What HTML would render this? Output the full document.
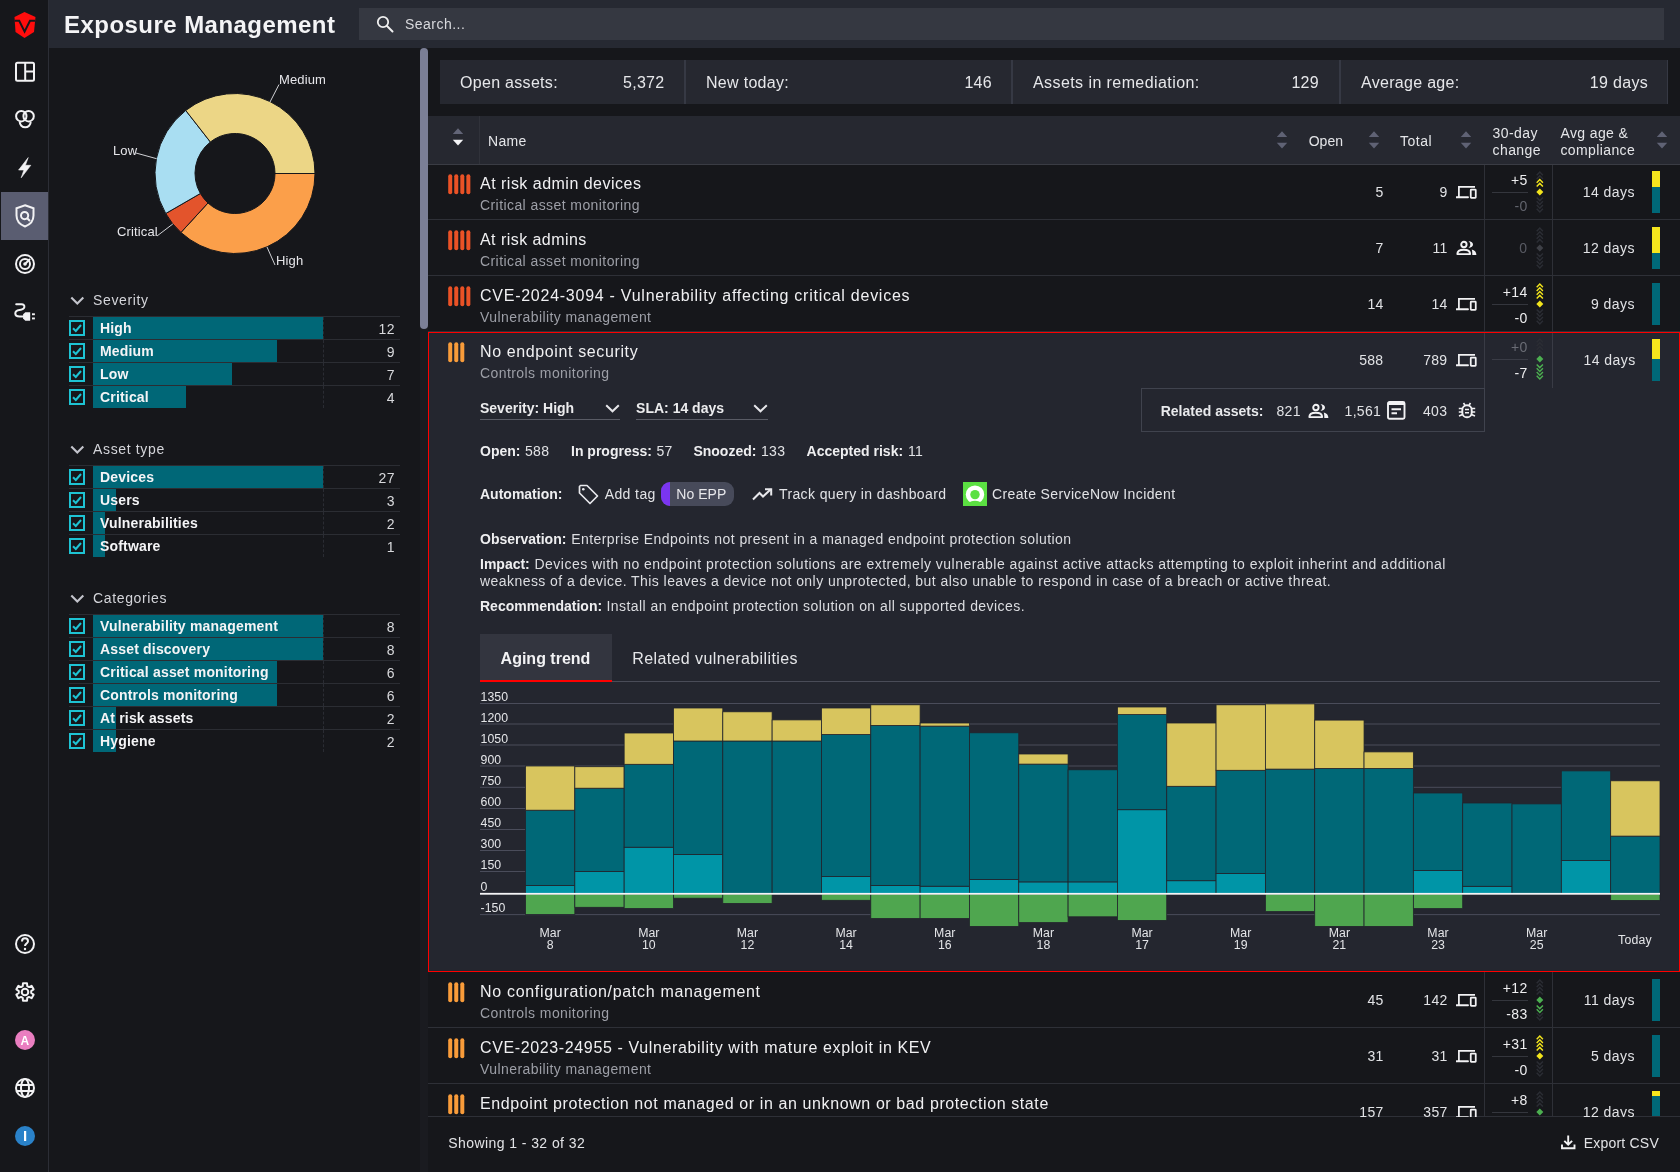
<!DOCTYPE html>
<html><head><meta charset="utf-8">
<style>
*{box-sizing:border-box;margin:0;padding:0}
html,body{width:1680px;height:1172px;overflow:hidden;background:#16171b}
body{will-change:transform;font-family:"Liberation Sans",sans-serif;color:#ececee;letter-spacing:0.03em;position:relative}
.a{position:absolute;white-space:nowrap}
.nav{left:0;top:0;width:49px;height:1172px;background:#16171b;border-right:1px solid #2c2e36}
.hdr{left:49px;top:0;width:1631px;height:48px;background:#262932}
.title{left:64px;top:10px;font-size:24px;font-weight:bold;color:#f4f4f6;letter-spacing:0.019em;line-height:30px}
.search{left:359px;top:8px;width:1305px;height:32px;background:#353841}
.stxt{left:405px;top:16px;font-size:14px;color:#d8d9dd;line-height:16px}
.sb{left:420px;top:48px;width:8px;height:281px;background:#7b7f96;border-radius:4px}
.track{left:420px;top:48px;width:8px;height:1124px;background:#1a1b20}

.lbl{font-size:13px;color:#e6e6ea;line-height:15px;letter-spacing:0.01em}
.fh{font-size:14px;color:#d4d5da;line-height:16px;left:93px;letter-spacing:0.65px}
.chev{left:69px}
.frow{left:69px;width:331px;height:23px;border-top:1px solid #2b2d33}
.cb{left:69px;width:16px;height:16px;border:2px solid #1ec3d3;border-radius:1px}
.bar{left:93px;height:23px;background:#006777}
.ft{left:100px;font-size:14px;font-weight:bold;color:#f4f4f6;line-height:16px;letter-spacing:0.18px}
.fc{right:1285px;font-size:14px;color:#d8d9dc;line-height:16px;text-align:right}
.dash{left:323px;width:0;height:23px;border-left:1px dashed #2a2c33}
</style></head><body>
<div class="a nav"></div>
<div class="a hdr"></div>
<div class="a title">Exposure Management</div>
<div class="a search"></div>
<svg class="a" style="left:376px;top:15px" width="18" height="18" viewBox="0 0 18 18"><circle cx="7" cy="7" r="5.2" fill="none" stroke="#f0f0f0" stroke-width="1.8"/><path d="M11 11 L16.5 16.5" stroke="#f0f0f0" stroke-width="2" stroke-linecap="round"/></svg>
<div class="a stxt">Search...</div>

<!-- DONUT -->
<svg class="a" style="left:49px;top:48px" width="371" height="240" viewBox="49 48 371 240">
<path d="M315.00 173.50 A80 80 0 0 1 180.95 232.48 L207.98 202.99 A40 40 0 0 0 275.00 173.50 Z" fill="#fb9f4a" stroke="#16171b" stroke-width="1"/>
<path d="M180.95 232.48 A80 80 0 0 1 165.72 213.50 L200.36 193.50 A40 40 0 0 0 207.98 202.99 Z" fill="#e3542c" stroke="#16171b" stroke-width="1"/>
<path d="M165.72 213.50 A80 80 0 0 1 185.75 110.46 L210.37 141.98 A40 40 0 0 0 200.36 193.50 Z" fill="#a9def2" stroke="#16171b" stroke-width="1"/>
<path d="M185.75 110.46 A80 80 0 0 1 315.00 173.50 L275.00 173.50 A40 40 0 0 0 210.37 141.98 Z" fill="#ecd686" stroke="#16171b" stroke-width="1"/>
<g stroke="#cfd0d4" stroke-width="1" fill="none">
<path d="M279 84.5 L270 102"/>
<path d="M136 153 L156.6 158.7"/>
<path d="M157 236 L172.8 224"/>
<path d="M267 247 L275 265"/>
</g>
</svg>
<div class="a lbl" style="left:279px;top:72px">Medium</div>
<div class="a lbl" style="left:113px;top:143px">Low</div>
<div class="a lbl" style="left:117px;top:224px">Critical</div>
<div class="a lbl" style="left:276px;top:253px">High</div>
<svg class="a chev" style="top:295.5px;left:69.5px" width="15" height="10" viewBox="0 0 15 10"><path d="M1.3 1.5 L7.3 7.5 L13.3 1.5" fill="none" stroke="#c3c4cc" stroke-width="2.1"/></svg>
<div class="a fh" style="top:292px">Severity</div>
<div class="a frow" style="top:316px"></div><div class="a bar" style="top:317px;width:230px;height:22px"></div><div class="a dash" style="top:317px;height:22px"></div><svg class="a" style="left:69px;top:320px" width="16" height="16" viewBox="0 0 16 16"><rect x="1" y="1" width="14" height="14" fill="none" stroke="#1ec3d3" stroke-width="2"/><path d="M4 8.2 L6.8 11 L12 5" fill="none" stroke="#1ec3d3" stroke-width="2"/></svg><div class="a ft" style="top:320px">High</div><div class="a fc" style="top:321px">12</div>
<div class="a frow" style="top:339px"></div><div class="a bar" style="top:340px;width:184px;height:22px"></div><div class="a dash" style="top:340px;height:22px"></div><svg class="a" style="left:69px;top:343px" width="16" height="16" viewBox="0 0 16 16"><rect x="1" y="1" width="14" height="14" fill="none" stroke="#1ec3d3" stroke-width="2"/><path d="M4 8.2 L6.8 11 L12 5" fill="none" stroke="#1ec3d3" stroke-width="2"/></svg><div class="a ft" style="top:343px">Medium</div><div class="a fc" style="top:344px">9</div>
<div class="a frow" style="top:362px"></div><div class="a bar" style="top:363px;width:138.5px;height:22px"></div><div class="a dash" style="top:363px;height:22px"></div><svg class="a" style="left:69px;top:366px" width="16" height="16" viewBox="0 0 16 16"><rect x="1" y="1" width="14" height="14" fill="none" stroke="#1ec3d3" stroke-width="2"/><path d="M4 8.2 L6.8 11 L12 5" fill="none" stroke="#1ec3d3" stroke-width="2"/></svg><div class="a ft" style="top:366px">Low</div><div class="a fc" style="top:367px">7</div>
<div class="a frow" style="top:385px"></div><div class="a bar" style="top:386px;width:92.69999999999999px;height:22px"></div><div class="a dash" style="top:386px;height:22px"></div><svg class="a" style="left:69px;top:389px" width="16" height="16" viewBox="0 0 16 16"><rect x="1" y="1" width="14" height="14" fill="none" stroke="#1ec3d3" stroke-width="2"/><path d="M4 8.2 L6.8 11 L12 5" fill="none" stroke="#1ec3d3" stroke-width="2"/></svg><div class="a ft" style="top:389px">Critical</div><div class="a fc" style="top:390px">4</div>
<svg class="a chev" style="top:444.5px;left:69.5px" width="15" height="10" viewBox="0 0 15 10"><path d="M1.3 1.5 L7.3 7.5 L13.3 1.5" fill="none" stroke="#c3c4cc" stroke-width="2.1"/></svg>
<div class="a fh" style="top:441px">Asset type</div>
<div class="a frow" style="top:465px"></div><div class="a bar" style="top:466px;width:230px;height:22px"></div><div class="a dash" style="top:466px;height:22px"></div><svg class="a" style="left:69px;top:469px" width="16" height="16" viewBox="0 0 16 16"><rect x="1" y="1" width="14" height="14" fill="none" stroke="#1ec3d3" stroke-width="2"/><path d="M4 8.2 L6.8 11 L12 5" fill="none" stroke="#1ec3d3" stroke-width="2"/></svg><div class="a ft" style="top:469px">Devices</div><div class="a fc" style="top:470px">27</div>
<div class="a frow" style="top:488px"></div><div class="a bar" style="top:489px;width:22.700000000000003px;height:22px"></div><div class="a dash" style="top:489px;height:22px"></div><svg class="a" style="left:69px;top:492px" width="16" height="16" viewBox="0 0 16 16"><rect x="1" y="1" width="14" height="14" fill="none" stroke="#1ec3d3" stroke-width="2"/><path d="M4 8.2 L6.8 11 L12 5" fill="none" stroke="#1ec3d3" stroke-width="2"/></svg><div class="a ft" style="top:492px">Users</div><div class="a fc" style="top:493px">3</div>
<div class="a frow" style="top:511px"></div><div class="a bar" style="top:512px;width:12px;height:22px"></div><div class="a dash" style="top:512px;height:22px"></div><svg class="a" style="left:69px;top:515px" width="16" height="16" viewBox="0 0 16 16"><rect x="1" y="1" width="14" height="14" fill="none" stroke="#1ec3d3" stroke-width="2"/><path d="M4 8.2 L6.8 11 L12 5" fill="none" stroke="#1ec3d3" stroke-width="2"/></svg><div class="a ft" style="top:515px">Vulnerabilities</div><div class="a fc" style="top:516px">2</div>
<div class="a frow" style="top:534px"></div><div class="a bar" style="top:535px;width:12px;height:22px"></div><div class="a dash" style="top:535px;height:22px"></div><svg class="a" style="left:69px;top:538px" width="16" height="16" viewBox="0 0 16 16"><rect x="1" y="1" width="14" height="14" fill="none" stroke="#1ec3d3" stroke-width="2"/><path d="M4 8.2 L6.8 11 L12 5" fill="none" stroke="#1ec3d3" stroke-width="2"/></svg><div class="a ft" style="top:538px">Software</div><div class="a fc" style="top:539px">1</div>
<svg class="a chev" style="top:593.5px;left:69.5px" width="15" height="10" viewBox="0 0 15 10"><path d="M1.3 1.5 L7.3 7.5 L13.3 1.5" fill="none" stroke="#c3c4cc" stroke-width="2.1"/></svg>
<div class="a fh" style="top:590px">Categories</div>
<div class="a frow" style="top:614px"></div><div class="a bar" style="top:615px;width:230px;height:22px"></div><div class="a dash" style="top:615px;height:22px"></div><svg class="a" style="left:69px;top:618px" width="16" height="16" viewBox="0 0 16 16"><rect x="1" y="1" width="14" height="14" fill="none" stroke="#1ec3d3" stroke-width="2"/><path d="M4 8.2 L6.8 11 L12 5" fill="none" stroke="#1ec3d3" stroke-width="2"/></svg><div class="a ft" style="top:618px">Vulnerability management</div><div class="a fc" style="top:619px">8</div>
<div class="a frow" style="top:637px"></div><div class="a bar" style="top:638px;width:230px;height:22px"></div><div class="a dash" style="top:638px;height:22px"></div><svg class="a" style="left:69px;top:641px" width="16" height="16" viewBox="0 0 16 16"><rect x="1" y="1" width="14" height="14" fill="none" stroke="#1ec3d3" stroke-width="2"/><path d="M4 8.2 L6.8 11 L12 5" fill="none" stroke="#1ec3d3" stroke-width="2"/></svg><div class="a ft" style="top:641px">Asset discovery</div><div class="a fc" style="top:642px">8</div>
<div class="a frow" style="top:660px"></div><div class="a bar" style="top:661px;width:184px;height:22px"></div><div class="a dash" style="top:661px;height:22px"></div><svg class="a" style="left:69px;top:664px" width="16" height="16" viewBox="0 0 16 16"><rect x="1" y="1" width="14" height="14" fill="none" stroke="#1ec3d3" stroke-width="2"/><path d="M4 8.2 L6.8 11 L12 5" fill="none" stroke="#1ec3d3" stroke-width="2"/></svg><div class="a ft" style="top:664px">Critical asset monitoring</div><div class="a fc" style="top:665px">6</div>
<div class="a frow" style="top:683px"></div><div class="a bar" style="top:684px;width:184px;height:22px"></div><div class="a dash" style="top:684px;height:22px"></div><svg class="a" style="left:69px;top:687px" width="16" height="16" viewBox="0 0 16 16"><rect x="1" y="1" width="14" height="14" fill="none" stroke="#1ec3d3" stroke-width="2"/><path d="M4 8.2 L6.8 11 L12 5" fill="none" stroke="#1ec3d3" stroke-width="2"/></svg><div class="a ft" style="top:687px">Controls monitoring</div><div class="a fc" style="top:688px">6</div>
<div class="a frow" style="top:706px"></div><div class="a bar" style="top:707px;width:23px;height:22px"></div><div class="a dash" style="top:707px;height:22px"></div><svg class="a" style="left:69px;top:710px" width="16" height="16" viewBox="0 0 16 16"><rect x="1" y="1" width="14" height="14" fill="none" stroke="#1ec3d3" stroke-width="2"/><path d="M4 8.2 L6.8 11 L12 5" fill="none" stroke="#1ec3d3" stroke-width="2"/></svg><div class="a ft" style="top:710px">At risk assets</div><div class="a fc" style="top:711px">2</div>
<div class="a frow" style="top:729px"></div><div class="a bar" style="top:730px;width:23px;height:22px"></div><div class="a dash" style="top:730px;height:22px"></div><svg class="a" style="left:69px;top:733px" width="16" height="16" viewBox="0 0 16 16"><rect x="1" y="1" width="14" height="14" fill="none" stroke="#1ec3d3" stroke-width="2"/><path d="M4 8.2 L6.8 11 L12 5" fill="none" stroke="#1ec3d3" stroke-width="2"/></svg><div class="a ft" style="top:733px">Hygiene</div><div class="a fc" style="top:734px">2</div>
<div class="a track"></div>
<div class="a sb"></div>

<!-- NAV ICONS -->
<svg class="a" style="left:0;top:0" width="48" height="1172" viewBox="0 0 48 1172">
 <g>
  <path d="M24.5 12 L35.5 17 L34 32 L24.5 38 L15.5 32 L14.5 17 Z" fill="#ff0d0d"/>
  <path d="M14.5 20.8 L19.2 20.8 L24.6 31.6 L30 20.8 L35 20.8" fill="none" stroke="#16171b" stroke-width="2"/>
 </g>
 <g fill="none" stroke="#f2f2f4" stroke-width="2">
  <rect x="16" y="62.7" width="18" height="18" rx="1.5"/>
  <path d="M25.2 62.7 V80.7 M25.2 71.6 H34"/>
  <circle cx="21.3" cy="116.2" r="5.2"/><circle cx="28.6" cy="116.2" r="5.2"/>
  <path d="M19.7 121.8 A5.5 5.5 0 1 0 30.7 121.8"/>
 </g>
 <path d="M28.2 157.6 L18.6 170 H23.9 L21.2 177.8 L30.8 165.3 H25.4 Z" fill="#f2f2f4" stroke="#f2f2f4" stroke-width="0.6" stroke-linejoin="round"/>
 <rect x="1" y="192" width="47" height="48" fill="#5a5d71"/>
 <g fill="none" stroke="#f2f2f4" stroke-width="2">
  <path d="M25 205.2 L33.5 208.3 V215.5 C33.5 221 29.5 224.8 25 226.5 C20.5 224.8 16.5 221 16.5 215.5 V208.3 Z"/>
  <circle cx="24.6" cy="215.6" r="3.6"/><path d="M27.2 218.2 L30 221"/>
  <circle cx="25" cy="264" r="9"/><circle cx="25" cy="264" r="5"/>
  <path d="M25 264 L30 259"/>
 </g>
 <circle cx="25" cy="264" r="1.8" fill="#f2f2f4"/>
 <path d="M16.2 304.2 H21.5 C23.8 304.2 24.6 305.8 24.3 307.3 C23.9 309.1 21.8 309.8 19.5 310.1 C16.6 310.5 15.3 312 15.3 313.6 C15.3 315.5 17 316.5 19.5 316.5 H23.5" fill="none" stroke="#f2f2f4" stroke-width="2" stroke-linecap="round"/>
 <path d="M23.1 314.3 L25.3 312.2 H30.2 V320.7 H25.3 L23.1 318.6 Z" fill="#f2f2f4"/>
 <rect x="32" y="313.3" width="2.9" height="1.9" fill="#f2f2f4"/><rect x="32" y="317.5" width="2.9" height="1.9" fill="#f2f2f4"/>
 <g fill="none" stroke="#f2f2f4" stroke-width="2">
  <circle cx="25" cy="944" r="9"/>
  <path d="M22 941.5 C22 939.5 23.3 938.3 25 938.3 C26.8 938.3 28 939.5 28 941.2 C28 943.5 25 943.6 25 946"/>
 </g>
 <circle cx="25" cy="949" r="1.2" fill="#f2f2f4"/>
 <g transform="translate(25 992)">
  <path fill="none" stroke="#f2f2f4" stroke-width="2" stroke-linejoin="round" d="M-2.26 -5.88 L-2.02 -8.77 L2.02 -8.77 L2.26 -5.88 L3.96 -4.90 L6.58 -6.14 L8.61 -2.63 L6.22 -0.99 L6.22 0.99 L8.61 2.63 L6.58 6.14 L3.96 4.90 L2.26 5.88 L2.02 8.77 L-2.02 8.77 L-2.26 5.88 L-3.96 4.90 L-6.58 6.14 L-8.61 2.63 L-6.22 0.99 L-6.22 -0.99 L-8.61 -2.63 L-6.58 -6.14 L-3.96 -4.90 Z"/>
  <circle r="3.3" fill="none" stroke="#f2f2f4" stroke-width="2"/>
 </g>
 <circle cx="25" cy="1040" r="10" fill="#ea7ec0"/>
 <text x="25" y="1044.5" font-family="Liberation Sans" font-size="12" font-weight="bold" fill="#fff" text-anchor="middle">A</text>
 <g fill="none" stroke="#f2f2f4" stroke-width="2">
  <circle cx="25" cy="1088" r="9"/>
  <ellipse cx="25" cy="1088" rx="4" ry="9"/>
  <path d="M16 1085 H34 M16 1091 H34"/>
 </g>
 <circle cx="25" cy="1136" r="10" fill="#2a82c9"/>
 <rect x="24" y="1131" width="2.2" height="10" fill="#fff"/>
</svg>
<!-- MAIN -->
<div class="a" style="left:440px;top:60px;width:1228px;height:44px;background:#262830;"></div>
<div class="a" style="left:684px;top:60px;width:2px;height:44px;background:#363944;"></div>
<div class="a" style="left:1011px;top:60px;width:2px;height:44px;background:#363944;"></div>
<div class="a" style="left:1339px;top:60px;width:2px;height:44px;background:#363944;"></div>
<div class="a" style="left:1667px;top:60px;width:1px;height:44px;background:#363944;"></div>
<div class="a" style="left:460px;top:73.0px;font-size:16px;line-height:20px;font-weight:normal;color:#e6e7ea;letter-spacing:0.3px;">Open assets:</div>
<div class="a" style="right:1015.5px;text-align:right;top:73.0px;font-size:16px;line-height:20px;font-weight:normal;color:#e6e7ea;letter-spacing:0.3px;">5,372</div>
<div class="a" style="left:706px;top:73.0px;font-size:16px;line-height:20px;font-weight:normal;color:#e6e7ea;letter-spacing:0.3px;">New today:</div>
<div class="a" style="right:688px;text-align:right;top:73.0px;font-size:16px;line-height:20px;font-weight:normal;color:#e6e7ea;letter-spacing:0.3px;">146</div>
<div class="a" style="left:1033px;top:73.0px;font-size:16px;line-height:20px;font-weight:normal;color:#e6e7ea;letter-spacing:0.42px;">Assets in remediation:</div>
<div class="a" style="right:361px;text-align:right;top:73.0px;font-size:16px;line-height:20px;font-weight:normal;color:#e6e7ea;letter-spacing:0.3px;">129</div>
<div class="a" style="left:1361px;top:73.0px;font-size:16px;line-height:20px;font-weight:normal;color:#e6e7ea;letter-spacing:0.3px;">Average age:</div>
<div class="a" style="right:32px;text-align:right;top:73.0px;font-size:16px;line-height:20px;font-weight:normal;color:#e6e7ea;letter-spacing:0.3px;">19 days</div>
<div class="a" style="left:428px;top:116px;width:1252px;height:48px;background:#262830;"></div>
<div class="a" style="left:428px;top:164px;width:1252px;height:1px;background:#3a3c44;"></div>
<div class="a" style="left:479px;top:116px;width:1px;height:48px;background:#30323a;"></div>
<svg class="a" style="left:451.7px;top:127.5px" width="12" height="18" viewBox="0 0 12 18"><path d="M0.8 6 L6 0.2 L11.2 6 Z" fill="#626577"/><path d="M0.8 11.8 L6 17.6 L11.2 11.8 Z" fill="#f4f4f6"/></svg>
<div class="a" style="left:488px;top:131.5px;font-size:14px;line-height:18px;font-weight:normal;color:#e4e5e8;letter-spacing:0.3px;">Name</div>
<svg class="a" style="left:1275.8px;top:131px" width="12" height="18" viewBox="0 0 12 18"><path d="M0.8 6 L6 0.2 L11.2 6 Z" fill="#5f6274"/><path d="M0.8 11.8 L6 17.6 L11.2 11.8 Z" fill="#5f6274"/></svg>
<svg class="a" style="left:1367.8px;top:131px" width="12" height="18" viewBox="0 0 12 18"><path d="M0.8 6 L6 0.2 L11.2 6 Z" fill="#5f6274"/><path d="M0.8 11.8 L6 17.6 L11.2 11.8 Z" fill="#5f6274"/></svg>
<svg class="a" style="left:1459.6px;top:131px" width="12" height="18" viewBox="0 0 12 18"><path d="M0.8 6 L6 0.2 L11.2 6 Z" fill="#5f6274"/><path d="M0.8 11.8 L6 17.6 L11.2 11.8 Z" fill="#5f6274"/></svg>
<svg class="a" style="left:1655.7px;top:131px" width="12" height="18" viewBox="0 0 12 18"><path d="M0.8 6 L6 0.2 L11.2 6 Z" fill="#5f6274"/><path d="M0.8 11.8 L6 17.6 L11.2 11.8 Z" fill="#5f6274"/></svg>
<div class="a" style="left:1308.7px;top:131.9px;font-size:14px;line-height:18px;font-weight:normal;color:#e4e5e8;letter-spacing:0.02px;">Open</div>
<div class="a" style="left:1400px;top:131.9px;font-size:14px;line-height:18px;font-weight:normal;color:#e4e5e8;letter-spacing:0.5px;">Total</div>
<div class="a" style="left:1492.6px;top:123.5px;font-size:14px;line-height:18px;font-weight:normal;color:#e4e5e8;letter-spacing:0.4px;">30-day</div>
<div class="a" style="left:1492.6px;top:140.7px;font-size:14px;line-height:18px;font-weight:normal;color:#e4e5e8;letter-spacing:0.4px;">change</div>
<div class="a" style="left:1560.4px;top:123.5px;font-size:14px;line-height:18px;font-weight:normal;color:#e4e5e8;letter-spacing:0.4px;">Avg age &amp;</div>
<div class="a" style="left:1560.4px;top:140.7px;font-size:14px;line-height:18px;font-weight:normal;color:#e4e5e8;letter-spacing:0.4px;">compliance</div>
<div class="a" style="left:428px;top:165px;width:1252px;height:167px;background:#16171b;"></div>
<div class="a" style="left:428px;top:219px;width:1252px;height:1px;background:#2e3037;"></div>
<div class="a" style="left:428px;top:275px;width:1252px;height:1px;background:#2e3037;"></div>
<div class="a" style="left:428px;top:331px;width:1252px;height:1px;background:#2e3037;"></div>
<div class="a" style="left:1484px;top:165px;width:1px;height:167px;background:#2e3037;"></div>
<div class="a" style="left:1552px;top:165px;width:1px;height:167px;background:#2e3037;"></div>
<svg class="a" style="left:448px;top:174px" width="24" height="21" viewBox="0 0 24 21"><rect x="0.20" y="0.3" width="4" height="20" rx="2" fill="#ea5226"/><rect x="6.25" y="0.3" width="4" height="20" rx="2" fill="#ea5226"/><rect x="12.30" y="0.3" width="4" height="20" rx="2" fill="#ea5226"/><rect x="18.35" y="0.3" width="4" height="20" rx="2" fill="#ea5226"/></svg>
<div class="a" style="left:480px;top:173.5px;font-size:16px;line-height:20px;font-weight:normal;color:#f0f0f2;letter-spacing:0.487px;">At risk admin devices</div>
<div class="a" style="left:480px;top:196.0px;font-size:14px;line-height:18px;font-weight:normal;color:#9d9fa7;letter-spacing:0.42px;">Critical asset monitoring</div>
<div class="a" style="right:296.4000000000001px;text-align:right;top:183.4px;font-size:14px;line-height:18px;font-weight:normal;color:#e2e3e6;letter-spacing:0.3px;">5</div>
<div class="a" style="right:232.4000000000001px;text-align:right;top:183.4px;font-size:14px;line-height:18px;font-weight:normal;color:#e2e3e6;letter-spacing:0.3px;">9</div>
<svg class="a" style="left:1455.5px;top:185px" width="22" height="15" viewBox="0 0 22 15"><path d="M2.9 12 V1.8 H19" fill="none" stroke="#f2f2f4" stroke-width="1.75"/><path d="M0.5 12.3 H12" stroke="#f2f2f4" stroke-width="1.9" stroke-linecap="round"/><rect x="14.75" y="4.65" width="5" height="8.1" rx="0.5" fill="none" stroke="#f2f2f4" stroke-width="1.75"/></svg>
<div class="a" style="right:152.5px;text-align:right;top:170.6px;font-size:14px;line-height:18px;font-weight:normal;color:#eeeef0;letter-spacing:0.3px;">+5</div>
<div class="a" style="right:152.5px;text-align:right;top:196.5px;font-size:14px;line-height:18px;font-weight:normal;color:#62646d;letter-spacing:0.3px;">-0</div>
<div class="a" style="left:1492px;top:192px;width:36px;height:1px;background:#34363d;"></div>
<svg class="a" style="left:1535.5px;top:168.4px" width="8" height="48" viewBox="0 0 8 48"><path d="M0.7 18.60 L3.8 15.40 L6.9 18.60" fill="none" stroke="#f2e41c" stroke-width="1.45"/><path d="M0.7 14.80 L3.8 11.60 L6.9 14.80" fill="none" stroke="#f2e41c" stroke-width="1.45"/><path d="M0.7 11.00 L3.8 7.80 L6.9 11.00" fill="none" stroke="#2b2d34" stroke-width="1.45"/><path d="M0.7 7.20 L3.8 4.00 L6.9 7.20" fill="none" stroke="#2b2d34" stroke-width="1.45"/><path d="M0.7 29.40 L3.8 32.60 L6.9 29.40" fill="none" stroke="#2b2d34" stroke-width="1.45"/><path d="M0.7 33.20 L3.8 36.40 L6.9 33.20" fill="none" stroke="#2b2d34" stroke-width="1.45"/><path d="M0.7 37.00 L3.8 40.20 L6.9 37.00" fill="none" stroke="#2b2d34" stroke-width="1.45"/><path d="M0.7 40.80 L3.8 44.00 L6.9 40.80" fill="none" stroke="#2b2d34" stroke-width="1.45"/><path d="M3.8 20.6 L7.3 24 L3.8 27.4 L0.3 24 Z" fill="#f2e41c"/></svg>
<div class="a" style="right:45px;text-align:right;top:183.4px;font-size:14px;line-height:18px;font-weight:normal;color:#e2e3e6;letter-spacing:0.45px;">14 days</div>
<div class="a" style="left:1652px;top:171px;width:8px;height:16px;background:#f5e51d;"></div>
<div class="a" style="left:1652px;top:187px;width:8px;height:26px;background:#006878;"></div>
<svg class="a" style="left:448px;top:230px" width="24" height="21" viewBox="0 0 24 21"><rect x="0.20" y="0.3" width="4" height="20" rx="2" fill="#ea5226"/><rect x="6.25" y="0.3" width="4" height="20" rx="2" fill="#ea5226"/><rect x="12.30" y="0.3" width="4" height="20" rx="2" fill="#ea5226"/><rect x="18.35" y="0.3" width="4" height="20" rx="2" fill="#ea5226"/></svg>
<div class="a" style="left:480px;top:229.5px;font-size:16px;line-height:20px;font-weight:normal;color:#f0f0f2;letter-spacing:0.452px;">At risk admins</div>
<div class="a" style="left:480px;top:252.0px;font-size:14px;line-height:18px;font-weight:normal;color:#9d9fa7;letter-spacing:0.42px;">Critical asset monitoring</div>
<div class="a" style="right:296.4000000000001px;text-align:right;top:239.4px;font-size:14px;line-height:18px;font-weight:normal;color:#e2e3e6;letter-spacing:0.3px;">7</div>
<div class="a" style="right:232.4000000000001px;text-align:right;top:239.4px;font-size:14px;line-height:18px;font-weight:normal;color:#e2e3e6;letter-spacing:0.3px;">11</div>
<svg class="a" style="left:1455.5px;top:240px" width="22" height="16" viewBox="0 0 22 16"><circle cx="7.9" cy="4.5" r="2.7" fill="none" stroke="#f2f2f4" stroke-width="1.9"/><path d="M12.4 1.1 C15.5 1.3 17 2.8 17 4.6 C17 6.4 15.5 7.9 12.4 8.1 C13.7 7 14.3 5.9 14.3 4.6 C14.3 3.3 13.7 2.2 12.4 1.1 Z" fill="#f2f2f4"/><path d="M1.35 14.1 C1.35 11.3 4.3 9.8 7.75 9.8 C11.2 9.8 14.15 11.3 14.15 14.1 Z" fill="none" stroke="#f2f2f4" stroke-width="1.9" stroke-linejoin="round"/><path d="M15.7 9.6 C18.6 10.3 20.4 12 20.4 15.1 H16.3 C16.3 12.6 16.2 10.9 15.7 9.6 Z" fill="#f2f2f4"/></svg>
<div class="a" style="right:152.5px;text-align:right;top:239.4px;font-size:14px;line-height:18px;font-weight:normal;color:#585a63;letter-spacing:0.42px;">0</div>
<svg class="a" style="left:1535.5px;top:224.4px" width="8" height="48" viewBox="0 0 8 48"><path d="M0.7 18.60 L3.8 15.40 L6.9 18.60" fill="none" stroke="#2b2d34" stroke-width="1.45"/><path d="M0.7 14.80 L3.8 11.60 L6.9 14.80" fill="none" stroke="#2b2d34" stroke-width="1.45"/><path d="M0.7 11.00 L3.8 7.80 L6.9 11.00" fill="none" stroke="#2b2d34" stroke-width="1.45"/><path d="M0.7 7.20 L3.8 4.00 L6.9 7.20" fill="none" stroke="#2b2d34" stroke-width="1.45"/><path d="M0.7 29.40 L3.8 32.60 L6.9 29.40" fill="none" stroke="#2b2d34" stroke-width="1.45"/><path d="M0.7 33.20 L3.8 36.40 L6.9 33.20" fill="none" stroke="#2b2d34" stroke-width="1.45"/><path d="M0.7 37.00 L3.8 40.20 L6.9 37.00" fill="none" stroke="#2b2d34" stroke-width="1.45"/><path d="M0.7 40.80 L3.8 44.00 L6.9 40.80" fill="none" stroke="#2b2d34" stroke-width="1.45"/><path d="M3.8 20.6 L7.3 24 L3.8 27.4 L0.3 24 Z" fill="#3e4047"/></svg>
<div class="a" style="right:45px;text-align:right;top:239.4px;font-size:14px;line-height:18px;font-weight:normal;color:#e2e3e6;letter-spacing:0.45px;">12 days</div>
<div class="a" style="left:1652px;top:227px;width:8px;height:26px;background:#f5e51d;"></div>
<div class="a" style="left:1652px;top:253px;width:8px;height:16px;background:#006878;"></div>
<svg class="a" style="left:448px;top:286px" width="24" height="21" viewBox="0 0 24 21"><rect x="0.20" y="0.3" width="4" height="20" rx="2" fill="#ea5226"/><rect x="6.25" y="0.3" width="4" height="20" rx="2" fill="#ea5226"/><rect x="12.30" y="0.3" width="4" height="20" rx="2" fill="#ea5226"/><rect x="18.35" y="0.3" width="4" height="20" rx="2" fill="#ea5226"/></svg>
<div class="a" style="left:480px;top:285.5px;font-size:16px;line-height:20px;font-weight:normal;color:#f0f0f2;letter-spacing:0.744px;">CVE-2024-3094 - Vulnerability affecting critical devices</div>
<div class="a" style="left:480px;top:308.0px;font-size:14px;line-height:18px;font-weight:normal;color:#9d9fa7;letter-spacing:0.42px;">Vulnerability management</div>
<div class="a" style="right:296.4000000000001px;text-align:right;top:295.4px;font-size:14px;line-height:18px;font-weight:normal;color:#e2e3e6;letter-spacing:0.3px;">14</div>
<div class="a" style="right:232.4000000000001px;text-align:right;top:295.4px;font-size:14px;line-height:18px;font-weight:normal;color:#e2e3e6;letter-spacing:0.3px;">14</div>
<svg class="a" style="left:1455.5px;top:297px" width="22" height="15" viewBox="0 0 22 15"><path d="M2.9 12 V1.8 H19" fill="none" stroke="#f2f2f4" stroke-width="1.75"/><path d="M0.5 12.3 H12" stroke="#f2f2f4" stroke-width="1.9" stroke-linecap="round"/><rect x="14.75" y="4.65" width="5" height="8.1" rx="0.5" fill="none" stroke="#f2f2f4" stroke-width="1.75"/></svg>
<div class="a" style="right:152.5px;text-align:right;top:282.6px;font-size:14px;line-height:18px;font-weight:normal;color:#eeeef0;letter-spacing:0.3px;">+14</div>
<div class="a" style="right:152.5px;text-align:right;top:308.5px;font-size:14px;line-height:18px;font-weight:normal;color:#eeeef0;letter-spacing:0.3px;">-0</div>
<div class="a" style="left:1492px;top:304px;width:36px;height:1px;background:#34363d;"></div>
<svg class="a" style="left:1535.5px;top:280.4px" width="8" height="48" viewBox="0 0 8 48"><path d="M0.7 18.60 L3.8 15.40 L6.9 18.60" fill="none" stroke="#f2e41c" stroke-width="1.45"/><path d="M0.7 14.80 L3.8 11.60 L6.9 14.80" fill="none" stroke="#f2e41c" stroke-width="1.45"/><path d="M0.7 11.00 L3.8 7.80 L6.9 11.00" fill="none" stroke="#f2e41c" stroke-width="1.45"/><path d="M0.7 7.20 L3.8 4.00 L6.9 7.20" fill="none" stroke="#f2e41c" stroke-width="1.45"/><path d="M0.7 29.40 L3.8 32.60 L6.9 29.40" fill="none" stroke="#2b2d34" stroke-width="1.45"/><path d="M0.7 33.20 L3.8 36.40 L6.9 33.20" fill="none" stroke="#2b2d34" stroke-width="1.45"/><path d="M0.7 37.00 L3.8 40.20 L6.9 37.00" fill="none" stroke="#2b2d34" stroke-width="1.45"/><path d="M0.7 40.80 L3.8 44.00 L6.9 40.80" fill="none" stroke="#2b2d34" stroke-width="1.45"/><path d="M3.8 20.6 L7.3 24 L3.8 27.4 L0.3 24 Z" fill="#f2e41c"/></svg>
<div class="a" style="right:45px;text-align:right;top:295.4px;font-size:14px;line-height:18px;font-weight:normal;color:#e2e3e6;letter-spacing:0.45px;">9 days</div>
<div class="a" style="left:1652px;top:283px;width:8px;height:42px;background:#006878;"></div>
<div class="a" style="left:428px;top:332px;width:1252px;height:640px;background:#24262f;"></div>
<div class="a" style="left:428px;top:332px;width:1252px;height:640px;border:1px solid #ff0000"></div>
<div class="a" style="left:1484px;top:333px;width:1px;height:55px;background:#393b45;"></div>
<div class="a" style="left:1552px;top:333px;width:1px;height:55px;background:#393b45;"></div>
<svg class="a" style="left:448px;top:342px" width="24" height="21" viewBox="0 0 24 21"><rect x="0.20" y="0.3" width="4" height="20" rx="2" fill="#f99c3a"/><rect x="6.25" y="0.3" width="4" height="20" rx="2" fill="#f99c3a"/><rect x="12.30" y="0.3" width="4" height="20" rx="2" fill="#f99c3a"/></svg>
<div class="a" style="left:480px;top:341.5px;font-size:16px;line-height:20px;font-weight:normal;color:#f0f0f2;letter-spacing:0.62px;">No endpoint security</div>
<div class="a" style="left:480px;top:364.0px;font-size:14px;line-height:18px;font-weight:normal;color:#9d9fa7;letter-spacing:0.42px;">Controls monitoring</div>
<div class="a" style="right:296.5999999999999px;text-align:right;top:351.4px;font-size:14px;line-height:18px;font-weight:normal;color:#e2e3e6;letter-spacing:0.3px;">588</div>
<div class="a" style="right:232.5999999999999px;text-align:right;top:351.4px;font-size:14px;line-height:18px;font-weight:normal;color:#e2e3e6;letter-spacing:0.3px;">789</div>
<svg class="a" style="left:1455.5px;top:353px" width="22" height="15" viewBox="0 0 22 15"><path d="M2.9 12 V1.8 H19" fill="none" stroke="#f2f2f4" stroke-width="1.75"/><path d="M0.5 12.3 H12" stroke="#f2f2f4" stroke-width="1.9" stroke-linecap="round"/><rect x="14.75" y="4.65" width="5" height="8.1" rx="0.5" fill="none" stroke="#f2f2f4" stroke-width="1.75"/></svg>
<div class="a" style="right:152.5px;text-align:right;top:338.4px;font-size:14px;line-height:18px;font-weight:normal;color:#6a6c75;letter-spacing:0.3px;">+0</div>
<div class="a" style="right:152.5px;text-align:right;top:364.0px;font-size:14px;line-height:18px;font-weight:normal;color:#eeeef0;letter-spacing:0.3px;">-7</div>
<div class="a" style="left:1492px;top:359px;width:36px;height:1px;background:#3a3c46;"></div>
<svg class="a" style="left:1535.5px;top:335.2px" width="8" height="48" viewBox="0 0 8 48"><path d="M0.7 18.60 L3.8 15.40 L6.9 18.60" fill="none" stroke="#2b2d34" stroke-width="1.45"/><path d="M0.7 14.80 L3.8 11.60 L6.9 14.80" fill="none" stroke="#2b2d34" stroke-width="1.45"/><path d="M0.7 11.00 L3.8 7.80 L6.9 11.00" fill="none" stroke="#2b2d34" stroke-width="1.45"/><path d="M0.7 7.20 L3.8 4.00 L6.9 7.20" fill="none" stroke="#2b2d34" stroke-width="1.45"/><path d="M0.7 29.40 L3.8 32.60 L6.9 29.40" fill="none" stroke="#4caf50" stroke-width="1.45"/><path d="M0.7 33.20 L3.8 36.40 L6.9 33.20" fill="none" stroke="#4caf50" stroke-width="1.45"/><path d="M0.7 37.00 L3.8 40.20 L6.9 37.00" fill="none" stroke="#4caf50" stroke-width="1.45"/><path d="M0.7 40.80 L3.8 44.00 L6.9 40.80" fill="none" stroke="#4caf50" stroke-width="1.45"/><path d="M3.8 20.6 L7.3 24 L3.8 27.4 L0.3 24 Z" fill="#4caf50"/></svg>
<div class="a" style="right:44.40000000000009px;text-align:right;top:351.0px;font-size:14px;line-height:18px;font-weight:normal;color:#e2e3e6;letter-spacing:0.45px;">14 days</div>
<div class="a" style="left:1652px;top:339px;width:8px;height:20px;background:#f5e51d;"></div>
<div class="a" style="left:1652px;top:359px;width:8px;height:22px;background:#006878;"></div>
<div class="a" style="left:1141px;top:388px;width:344px;height:44px;border:1px solid #40434e"></div>
<div class="a" style="left:1160.7px;top:401.7px;font-size:14px;line-height:18px;font-weight:bold;color:#e8e9ec;letter-spacing:0px;">Related assets:</div>
<div class="a" style="left:1276.5px;top:401.7px;font-size:14px;line-height:18px;font-weight:normal;color:#e2e3e6;letter-spacing:0.3px;">821</div>
<svg class="a" style="left:1307.5px;top:402.5px" width="22" height="16" viewBox="0 0 22 16"><circle cx="7.9" cy="4.5" r="2.7" fill="none" stroke="#f2f2f4" stroke-width="1.9"/><path d="M12.4 1.1 C15.5 1.3 17 2.8 17 4.6 C17 6.4 15.5 7.9 12.4 8.1 C13.7 7 14.3 5.9 14.3 4.6 C14.3 3.3 13.7 2.2 12.4 1.1 Z" fill="#f2f2f4"/><path d="M1.35 14.1 C1.35 11.3 4.3 9.8 7.75 9.8 C11.2 9.8 14.15 11.3 14.15 14.1 Z" fill="none" stroke="#f2f2f4" stroke-width="1.9" stroke-linejoin="round"/><path d="M15.7 9.6 C18.6 10.3 20.4 12 20.4 15.1 H16.3 C16.3 12.6 16.2 10.9 15.7 9.6 Z" fill="#f2f2f4"/></svg>
<div class="a" style="left:1344.6px;top:401.7px;font-size:14px;line-height:18px;font-weight:normal;color:#e2e3e6;letter-spacing:0.3px;">1,561</div>
<svg class="a" style="left:1387px;top:400.5px" width="19" height="19" viewBox="0 0 19 19"><rect x="1" y="1" width="16.5" height="16.8" rx="1.5" fill="none" stroke="#f2f2f4" stroke-width="1.9"/><rect x="1" y="1" width="16.5" height="3" fill="#f2f2f4"/><path d="M4.5 8.3 H14 M4.5 12.2 H10" stroke="#f2f2f4" stroke-width="1.9"/></svg>
<div class="a" style="left:1423px;top:401.7px;font-size:14px;line-height:18px;font-weight:normal;color:#e2e3e6;letter-spacing:0.3px;">403</div>
<svg class="a" style="left:1458px;top:401px" width="18" height="18" viewBox="0 0 18 18"><path d="M5.5 2 L7 4.3 M12.5 2 L11 4.3" stroke="#f2f2f4" stroke-width="1.6"/><rect x="4.3" y="4.3" width="9.4" height="12" rx="4.6" fill="none" stroke="#f2f2f4" stroke-width="1.9"/><path d="M7 8.5 H11 M7 11.8 H11 M0.8 7.5 H4.3 M13.7 7.5 H17.2 M0.8 11 H4.3 M13.7 11 H17.2 M1 15 L4.5 13.5 M17 15 L13.5 13.5" stroke="#f2f2f4" stroke-width="1.6"/></svg>
<div class="a" style="left:480px;top:399.0px;font-size:14px;line-height:18px;font-weight:bold;color:#ececee;letter-spacing:0px;">Severity: High</div>
<svg class="a" style="left:604.5px;top:404px" width="15" height="9" viewBox="0 0 15 9"><path d="M1.2 1.2 L7.5 7.3 L13.8 1.2" fill="none" stroke="#e6e6ea" stroke-width="2"/></svg>
<div class="a" style="left:480px;top:419px;width:140px;height:1px;background:#5a5c66;"></div>
<div class="a" style="left:636.1px;top:399.0px;font-size:14px;line-height:18px;font-weight:bold;color:#ececee;letter-spacing:0px;">SLA: 14 days</div>
<svg class="a" style="left:752.5px;top:404px" width="15" height="9" viewBox="0 0 15 9"><path d="M1.2 1.2 L7.5 7.3 L13.8 1.2" fill="none" stroke="#e6e6ea" stroke-width="2"/></svg>
<div class="a" style="left:636px;top:419px;width:132px;height:1px;background:#5a5c66;"></div>
<div class="a" style="left:480px;top:441.8px;font-size:14px;line-height:18px;font-weight:bold;color:#eeeef0;letter-spacing:0px;">Open:</div>
<div class="a" style="left:525px;top:441.8px;font-size:14px;line-height:18px;font-weight:normal;color:#e2e3e6;letter-spacing:0.3px;">588</div>
<div class="a" style="left:571px;top:441.8px;font-size:14px;line-height:18px;font-weight:bold;color:#eeeef0;letter-spacing:0px;">In progress:</div>
<div class="a" style="left:656.5px;top:441.8px;font-size:14px;line-height:18px;font-weight:normal;color:#e2e3e6;letter-spacing:0.3px;">57</div>
<div class="a" style="left:693.4px;top:441.8px;font-size:14px;line-height:18px;font-weight:bold;color:#eeeef0;letter-spacing:0px;">Snoozed:</div>
<div class="a" style="left:761px;top:441.8px;font-size:14px;line-height:18px;font-weight:normal;color:#e2e3e6;letter-spacing:0.3px;">133</div>
<div class="a" style="left:806.6px;top:441.8px;font-size:14px;line-height:18px;font-weight:bold;color:#eeeef0;letter-spacing:0px;">Accepted risk:</div>
<div class="a" style="left:908px;top:441.8px;font-size:14px;line-height:18px;font-weight:normal;color:#e2e3e6;letter-spacing:0.3px;">11</div>
<div class="a" style="left:480px;top:485.0px;font-size:14px;line-height:18px;font-weight:bold;color:#eeeef0;letter-spacing:0px;">Automation:</div>
<svg class="a" style="left:577.5px;top:483.5px" width="21" height="21" viewBox="0 0 21 21"><path d="M1.5 2.5 V9 L12 19.5 L19.5 12 L9 1.5 H2.5 Z" fill="none" stroke="#e8e8ec" stroke-width="1.7" stroke-linejoin="round"/><circle cx="5.3" cy="5.3" r="1.3" fill="#e8e8ec"/></svg>
<div class="a" style="left:604.7px;top:485.0px;font-size:14px;line-height:18px;font-weight:normal;color:#e2e3e6;letter-spacing:0.4px;">Add tag</div>
<div class="a" style="left:661px;top:482px;width:73px;height:24px;border-radius:9px;background:#474a5a;overflow:hidden"><div style="position:absolute;left:0;top:0;width:8.5px;height:24px;background:#7a35f0"></div></div>
<div class="a" style="left:676.3px;top:485.0px;font-size:14px;line-height:18px;font-weight:normal;color:#e6e6ea;letter-spacing:0.05px;">No EPP</div>
<svg class="a" style="left:752px;top:487.5px" width="21" height="13" viewBox="0 0 21 13"><path d="M1 11.5 L7.5 5 L11 8.5 L18.8 1.2" fill="none" stroke="#e8e8ec" stroke-width="2"/><path d="M13 1.2 H19.2 V7.4" fill="none" stroke="#e8e8ec" stroke-width="2"/></svg>
<div class="a" style="left:779px;top:485.0px;font-size:14px;line-height:18px;font-weight:normal;color:#e2e3e6;letter-spacing:0.38px;">Track query in dashboard</div>
<svg class="a" style="left:963px;top:482px" width="24" height="24" viewBox="0 0 24 24"><rect width="24" height="24" fill="#5be042"/><circle cx="12" cy="12.6" r="9.2" fill="#ffffff"/><circle cx="12" cy="12.6" r="4.7" fill="#5be042"/><ellipse cx="12" cy="21.6" rx="5.9" ry="2.9" fill="#5be042"/></svg>
<div class="a" style="left:992px;top:485.0px;font-size:14px;line-height:18px;font-weight:normal;color:#e2e3e6;letter-spacing:0.38px;">Create ServiceNow Incident</div>
<div class="a" style="left:480px;top:529.8px;font-size:14px;line-height:18px;font-weight:bold;color:#eeeef0;letter-spacing:0px;">Observation:</div>
<div class="a" style="left:571.2px;top:529.8px;font-size:14px;line-height:18px;font-weight:normal;color:#dcdde1;letter-spacing:0.44px;">Enterprise Endpoints not present in a managed endpoint protection solution</div>
<div class="a" style="left:480px;top:555.0px;font-size:14px;line-height:18px;font-weight:bold;color:#eeeef0;letter-spacing:0px;">Impact:</div>
<div class="a" style="left:534.5px;top:555.0px;font-size:14px;line-height:18px;font-weight:normal;color:#dcdde1;letter-spacing:0.476px;">Devices with no endpoint protection solutions are extremely vulnerable against active attacks attempting to exploit inherint and additional</div>
<div class="a" style="left:480px;top:572.0px;font-size:14px;line-height:18px;font-weight:normal;color:#dcdde1;letter-spacing:0.44px;">weakness of a device. This leaves a device not only unprotected, but also unable to respond in case of a breach or active threat.</div>
<div class="a" style="left:480px;top:597.0px;font-size:14px;line-height:18px;font-weight:bold;color:#eeeef0;letter-spacing:0px;">Recommendation:</div>
<div class="a" style="left:606.5px;top:597.0px;font-size:14px;line-height:18px;font-weight:normal;color:#dcdde1;letter-spacing:0.44px;">Install an endpoint protection solution on all supported devices.</div>
<div class="a" style="left:480px;top:634px;width:132px;height:46px;background:#33353f;"></div>
<div class="a" style="left:480px;top:680.5px;width:1180px;height:1.0px;background:#4a4c58;"></div>
<div class="a" style="left:480px;top:679.5px;width:132px;height:2.5px;background:#ff0000;"></div>
<div class="a" style="left:500.6px;top:648.6px;font-size:16px;line-height:20px;font-weight:bold;color:#f2f2f4;letter-spacing:0px;">Aging trend</div>
<div class="a" style="left:632.2px;top:648.6px;font-size:16px;line-height:20px;font-weight:normal;color:#e4e5e8;letter-spacing:0.4px;">Related vulnerabilities</div>
<svg class="a" style="left:428px;top:682px" width="1252" height="290" viewBox="428 682 1252 290"><rect x="480" y="703.0" width="1180" height="1" fill="#4a4c5a"/><rect x="480" y="723.5" width="1180" height="1" fill="#4a4c5a"/><rect x="480" y="744.5" width="1180" height="1" fill="#4a4c5a"/><rect x="480" y="765.5" width="1180" height="1" fill="#4a4c5a"/><rect x="480" y="786.8" width="1180" height="1" fill="#4a4c5a"/><rect x="480" y="808.0" width="1180" height="1" fill="#4a4c5a"/><rect x="480" y="829.0" width="1180" height="1" fill="#4a4c5a"/><rect x="480" y="850.0" width="1180" height="1" fill="#4a4c5a"/><rect x="480" y="871.0" width="1180" height="1" fill="#4a4c5a"/><rect x="480" y="892.8" width="1180" height="1" fill="#4a4c5a"/><rect x="480" y="914.1" width="1180" height="1" fill="#4a4c5a"/><rect x="525.50" y="893.8" width="49.33" height="20.6" fill="#4fa64f" stroke="#22242c" stroke-width="0.8"/><rect x="525.50" y="885.4" width="49.33" height="8.4" fill="#0095a7" stroke="#22242c" stroke-width="0.8"/><rect x="525.50" y="810.2" width="49.33" height="75.2" fill="#006877" stroke="#22242c" stroke-width="0.8"/><rect x="525.50" y="766.0" width="49.33" height="44.2" fill="#d8c55e" stroke="#22242c" stroke-width="0.8"/><rect x="574.83" y="893.8" width="49.33" height="13.5" fill="#4fa64f" stroke="#22242c" stroke-width="0.8"/><rect x="574.83" y="871.4" width="49.33" height="22.4" fill="#0095a7" stroke="#22242c" stroke-width="0.8"/><rect x="574.83" y="788.2" width="49.33" height="83.2" fill="#006877" stroke="#22242c" stroke-width="0.8"/><rect x="574.83" y="766.7" width="49.33" height="21.5" fill="#d8c55e" stroke="#22242c" stroke-width="0.8"/><rect x="624.15" y="893.8" width="49.33" height="14.7" fill="#4fa64f" stroke="#22242c" stroke-width="0.8"/><rect x="624.15" y="847.2" width="49.33" height="46.6" fill="#0095a7" stroke="#22242c" stroke-width="0.8"/><rect x="624.15" y="764.3" width="49.33" height="82.9" fill="#006877" stroke="#22242c" stroke-width="0.8"/><rect x="624.15" y="733.0" width="49.33" height="31.3" fill="#d8c55e" stroke="#22242c" stroke-width="0.8"/><rect x="673.48" y="893.8" width="49.33" height="4.4" fill="#4fa64f" stroke="#22242c" stroke-width="0.8"/><rect x="673.48" y="854.4" width="49.33" height="39.4" fill="#0095a7" stroke="#22242c" stroke-width="0.8"/><rect x="673.48" y="741.0" width="49.33" height="113.4" fill="#006877" stroke="#22242c" stroke-width="0.8"/><rect x="673.48" y="708.0" width="49.33" height="33.0" fill="#d8c55e" stroke="#22242c" stroke-width="0.8"/><rect x="722.80" y="893.8" width="49.33" height="9.6" fill="#4fa64f" stroke="#22242c" stroke-width="0.8"/><rect x="722.80" y="741.0" width="49.33" height="152.8" fill="#006877" stroke="#22242c" stroke-width="0.8"/><rect x="722.80" y="711.8" width="49.33" height="29.2" fill="#d8c55e" stroke="#22242c" stroke-width="0.8"/><rect x="772.13" y="741.0" width="49.33" height="152.8" fill="#006877" stroke="#22242c" stroke-width="0.8"/><rect x="772.13" y="719.9" width="49.33" height="21.1" fill="#d8c55e" stroke="#22242c" stroke-width="0.8"/><rect x="821.46" y="893.8" width="49.33" height="6.5" fill="#4fa64f" stroke="#22242c" stroke-width="0.8"/><rect x="821.46" y="876.6" width="49.33" height="17.2" fill="#0095a7" stroke="#22242c" stroke-width="0.8"/><rect x="821.46" y="734.5" width="49.33" height="142.1" fill="#006877" stroke="#22242c" stroke-width="0.8"/><rect x="821.46" y="708.0" width="49.33" height="26.5" fill="#d8c55e" stroke="#22242c" stroke-width="0.8"/><rect x="870.78" y="893.8" width="49.33" height="24.7" fill="#4fa64f" stroke="#22242c" stroke-width="0.8"/><rect x="870.78" y="885.4" width="49.33" height="8.4" fill="#0095a7" stroke="#22242c" stroke-width="0.8"/><rect x="870.78" y="725.4" width="49.33" height="160.0" fill="#006877" stroke="#22242c" stroke-width="0.8"/><rect x="870.78" y="704.8" width="49.33" height="20.6" fill="#d8c55e" stroke="#22242c" stroke-width="0.8"/><rect x="920.11" y="893.8" width="49.33" height="24.7" fill="#4fa64f" stroke="#22242c" stroke-width="0.8"/><rect x="920.11" y="886.2" width="49.33" height="7.6" fill="#0095a7" stroke="#22242c" stroke-width="0.8"/><rect x="920.11" y="726.1" width="49.33" height="160.1" fill="#006877" stroke="#22242c" stroke-width="0.8"/><rect x="920.11" y="723.0" width="49.33" height="3.1" fill="#d8c55e" stroke="#22242c" stroke-width="0.8"/><rect x="969.43" y="893.8" width="49.33" height="32.6" fill="#4fa64f" stroke="#22242c" stroke-width="0.8"/><rect x="969.43" y="879.5" width="49.33" height="14.3" fill="#0095a7" stroke="#22242c" stroke-width="0.8"/><rect x="969.43" y="732.8" width="49.33" height="146.7" fill="#006877" stroke="#22242c" stroke-width="0.8"/><rect x="1018.76" y="893.8" width="49.33" height="28.8" fill="#4fa64f" stroke="#22242c" stroke-width="0.8"/><rect x="1018.76" y="881.9" width="49.33" height="11.9" fill="#0095a7" stroke="#22242c" stroke-width="0.8"/><rect x="1018.76" y="764.1" width="49.33" height="117.8" fill="#006877" stroke="#22242c" stroke-width="0.8"/><rect x="1018.76" y="754.0" width="49.33" height="10.1" fill="#d8c55e" stroke="#22242c" stroke-width="0.8"/><rect x="1068.09" y="893.8" width="49.33" height="23.0" fill="#4fa64f" stroke="#22242c" stroke-width="0.8"/><rect x="1068.09" y="881.9" width="49.33" height="11.9" fill="#0095a7" stroke="#22242c" stroke-width="0.8"/><rect x="1068.09" y="769.8" width="49.33" height="112.1" fill="#006877" stroke="#22242c" stroke-width="0.8"/><rect x="1117.41" y="893.8" width="49.33" height="26.6" fill="#4fa64f" stroke="#22242c" stroke-width="0.8"/><rect x="1117.41" y="809.7" width="49.33" height="84.1" fill="#0095a7" stroke="#22242c" stroke-width="0.8"/><rect x="1117.41" y="714.6" width="49.33" height="95.1" fill="#006877" stroke="#22242c" stroke-width="0.8"/><rect x="1117.41" y="707.0" width="49.33" height="7.6" fill="#d8c55e" stroke="#22242c" stroke-width="0.8"/><rect x="1166.74" y="880.7" width="49.33" height="13.1" fill="#0095a7" stroke="#22242c" stroke-width="0.8"/><rect x="1166.74" y="786.3" width="49.33" height="94.4" fill="#006877" stroke="#22242c" stroke-width="0.8"/><rect x="1166.74" y="723.0" width="49.33" height="63.3" fill="#d8c55e" stroke="#22242c" stroke-width="0.8"/><rect x="1216.07" y="873.5" width="49.33" height="20.3" fill="#0095a7" stroke="#22242c" stroke-width="0.8"/><rect x="1216.07" y="770.3" width="49.33" height="103.2" fill="#006877" stroke="#22242c" stroke-width="0.8"/><rect x="1216.07" y="704.8" width="49.33" height="65.5" fill="#d8c55e" stroke="#22242c" stroke-width="0.8"/><rect x="1265.39" y="893.8" width="49.33" height="17.8" fill="#4fa64f" stroke="#22242c" stroke-width="0.8"/><rect x="1265.39" y="769.1" width="49.33" height="124.7" fill="#006877" stroke="#22242c" stroke-width="0.8"/><rect x="1265.39" y="703.9" width="49.33" height="65.2" fill="#d8c55e" stroke="#22242c" stroke-width="0.8"/><rect x="1314.72" y="893.8" width="49.33" height="32.6" fill="#4fa64f" stroke="#22242c" stroke-width="0.8"/><rect x="1314.72" y="768.4" width="49.33" height="125.4" fill="#006877" stroke="#22242c" stroke-width="0.8"/><rect x="1314.72" y="720.1" width="49.33" height="48.3" fill="#d8c55e" stroke="#22242c" stroke-width="0.8"/><rect x="1364.04" y="893.8" width="49.33" height="32.6" fill="#4fa64f" stroke="#22242c" stroke-width="0.8"/><rect x="1364.04" y="768.4" width="49.33" height="125.4" fill="#006877" stroke="#22242c" stroke-width="0.8"/><rect x="1364.04" y="751.9" width="49.33" height="16.5" fill="#d8c55e" stroke="#22242c" stroke-width="0.8"/><rect x="1413.37" y="893.8" width="49.33" height="14.8" fill="#4fa64f" stroke="#22242c" stroke-width="0.8"/><rect x="1413.37" y="870.5" width="49.33" height="23.3" fill="#0095a7" stroke="#22242c" stroke-width="0.8"/><rect x="1413.37" y="793.0" width="49.33" height="77.5" fill="#006877" stroke="#22242c" stroke-width="0.8"/><rect x="1462.70" y="886.3" width="49.33" height="7.5" fill="#0095a7" stroke="#22242c" stroke-width="0.8"/><rect x="1462.70" y="803.0" width="49.33" height="83.3" fill="#006877" stroke="#22242c" stroke-width="0.8"/><rect x="1512.02" y="803.9" width="49.33" height="89.9" fill="#006877" stroke="#22242c" stroke-width="0.8"/><rect x="1561.35" y="860.4" width="49.33" height="33.4" fill="#0095a7" stroke="#22242c" stroke-width="0.8"/><rect x="1561.35" y="770.9" width="49.33" height="89.5" fill="#006877" stroke="#22242c" stroke-width="0.8"/><rect x="1610.67" y="893.8" width="49.33" height="6.6" fill="#4fa64f" stroke="#22242c" stroke-width="0.8"/><rect x="1610.67" y="836.1" width="49.33" height="57.7" fill="#006877" stroke="#22242c" stroke-width="0.8"/><rect x="1610.67" y="780.8" width="49.33" height="55.3" fill="#d8c55e" stroke="#22242c" stroke-width="0.8"/><rect x="480" y="892.9" width="1180" height="1.8" fill="#f4f4f6"/></svg>
<div class="a" style="left:480.5px;top:690.0px;font-size:12.3px;line-height:15px;font-weight:normal;color:#e4e5e8;letter-spacing:0.05px;">1350</div>
<div class="a" style="left:480.5px;top:710.5px;font-size:12.3px;line-height:15px;font-weight:normal;color:#e4e5e8;letter-spacing:0.05px;">1200</div>
<div class="a" style="left:480.5px;top:731.5px;font-size:12.3px;line-height:15px;font-weight:normal;color:#e4e5e8;letter-spacing:0.05px;">1050</div>
<div class="a" style="left:480.5px;top:752.5px;font-size:12.3px;line-height:15px;font-weight:normal;color:#e4e5e8;letter-spacing:0.05px;">900</div>
<div class="a" style="left:480.5px;top:773.8px;font-size:12.3px;line-height:15px;font-weight:normal;color:#e4e5e8;letter-spacing:0.05px;">750</div>
<div class="a" style="left:480.5px;top:795.0px;font-size:12.3px;line-height:15px;font-weight:normal;color:#e4e5e8;letter-spacing:0.05px;">600</div>
<div class="a" style="left:480.5px;top:816.0px;font-size:12.3px;line-height:15px;font-weight:normal;color:#e4e5e8;letter-spacing:0.05px;">450</div>
<div class="a" style="left:480.5px;top:837.0px;font-size:12.3px;line-height:15px;font-weight:normal;color:#e4e5e8;letter-spacing:0.05px;">300</div>
<div class="a" style="left:480.5px;top:858.0px;font-size:12.3px;line-height:15px;font-weight:normal;color:#e4e5e8;letter-spacing:0.05px;">150</div>
<div class="a" style="left:480.5px;top:879.8px;font-size:12.3px;line-height:15px;font-weight:normal;color:#e4e5e8;letter-spacing:0.05px;">0</div>
<div class="a" style="left:480.5px;top:901.1px;font-size:12.3px;line-height:15px;font-weight:normal;color:#e4e5e8;letter-spacing:0.05px;">-150</div>
<div class="a" style="left:350.1630434782609px;width:400px;text-align:center;top:926.3px;font-size:12.3px;line-height:15px;font-weight:normal;color:#e4e5e8;letter-spacing:0.05px;">Mar</div>
<div class="a" style="left:350.1630434782609px;width:400px;text-align:center;top:938.3px;font-size:12.3px;line-height:15px;font-weight:normal;color:#e4e5e8;letter-spacing:0.05px;">8</div>
<div class="a" style="left:448.8152173913044px;width:400px;text-align:center;top:926.3px;font-size:12.3px;line-height:15px;font-weight:normal;color:#e4e5e8;letter-spacing:0.05px;">Mar</div>
<div class="a" style="left:448.8152173913044px;width:400px;text-align:center;top:938.3px;font-size:12.3px;line-height:15px;font-weight:normal;color:#e4e5e8;letter-spacing:0.05px;">10</div>
<div class="a" style="left:547.4673913043479px;width:400px;text-align:center;top:926.3px;font-size:12.3px;line-height:15px;font-weight:normal;color:#e4e5e8;letter-spacing:0.05px;">Mar</div>
<div class="a" style="left:547.4673913043479px;width:400px;text-align:center;top:938.3px;font-size:12.3px;line-height:15px;font-weight:normal;color:#e4e5e8;letter-spacing:0.05px;">12</div>
<div class="a" style="left:646.1195652173914px;width:400px;text-align:center;top:926.3px;font-size:12.3px;line-height:15px;font-weight:normal;color:#e4e5e8;letter-spacing:0.05px;">Mar</div>
<div class="a" style="left:646.1195652173914px;width:400px;text-align:center;top:938.3px;font-size:12.3px;line-height:15px;font-weight:normal;color:#e4e5e8;letter-spacing:0.05px;">14</div>
<div class="a" style="left:744.7717391304349px;width:400px;text-align:center;top:926.3px;font-size:12.3px;line-height:15px;font-weight:normal;color:#e4e5e8;letter-spacing:0.05px;">Mar</div>
<div class="a" style="left:744.7717391304349px;width:400px;text-align:center;top:938.3px;font-size:12.3px;line-height:15px;font-weight:normal;color:#e4e5e8;letter-spacing:0.05px;">16</div>
<div class="a" style="left:843.4239130434783px;width:400px;text-align:center;top:926.3px;font-size:12.3px;line-height:15px;font-weight:normal;color:#e4e5e8;letter-spacing:0.05px;">Mar</div>
<div class="a" style="left:843.4239130434783px;width:400px;text-align:center;top:938.3px;font-size:12.3px;line-height:15px;font-weight:normal;color:#e4e5e8;letter-spacing:0.05px;">18</div>
<div class="a" style="left:942.0760869565217px;width:400px;text-align:center;top:926.3px;font-size:12.3px;line-height:15px;font-weight:normal;color:#e4e5e8;letter-spacing:0.05px;">Mar</div>
<div class="a" style="left:942.0760869565217px;width:400px;text-align:center;top:938.3px;font-size:12.3px;line-height:15px;font-weight:normal;color:#e4e5e8;letter-spacing:0.05px;">17</div>
<div class="a" style="left:1040.7282608695652px;width:400px;text-align:center;top:926.3px;font-size:12.3px;line-height:15px;font-weight:normal;color:#e4e5e8;letter-spacing:0.05px;">Mar</div>
<div class="a" style="left:1040.7282608695652px;width:400px;text-align:center;top:938.3px;font-size:12.3px;line-height:15px;font-weight:normal;color:#e4e5e8;letter-spacing:0.05px;">19</div>
<div class="a" style="left:1139.3804347826087px;width:400px;text-align:center;top:926.3px;font-size:12.3px;line-height:15px;font-weight:normal;color:#e4e5e8;letter-spacing:0.05px;">Mar</div>
<div class="a" style="left:1139.3804347826087px;width:400px;text-align:center;top:938.3px;font-size:12.3px;line-height:15px;font-weight:normal;color:#e4e5e8;letter-spacing:0.05px;">21</div>
<div class="a" style="left:1238.0326086956522px;width:400px;text-align:center;top:926.3px;font-size:12.3px;line-height:15px;font-weight:normal;color:#e4e5e8;letter-spacing:0.05px;">Mar</div>
<div class="a" style="left:1238.0326086956522px;width:400px;text-align:center;top:938.3px;font-size:12.3px;line-height:15px;font-weight:normal;color:#e4e5e8;letter-spacing:0.05px;">23</div>
<div class="a" style="left:1336.6847826086957px;width:400px;text-align:center;top:926.3px;font-size:12.3px;line-height:15px;font-weight:normal;color:#e4e5e8;letter-spacing:0.05px;">Mar</div>
<div class="a" style="left:1336.6847826086957px;width:400px;text-align:center;top:938.3px;font-size:12.3px;line-height:15px;font-weight:normal;color:#e4e5e8;letter-spacing:0.05px;">25</div>
<div class="a" style="left:1435px;width:400px;text-align:center;top:932.5px;font-size:12.3px;line-height:15px;font-weight:normal;color:#e4e5e8;letter-spacing:0.2px;">Today</div>
<div class="a" style="left:428px;top:1027px;width:1252px;height:1px;background:#2e3037;"></div>
<div class="a" style="left:428px;top:1083px;width:1252px;height:1px;background:#2e3037;"></div>
<div class="a" style="left:428px;top:1116px;width:1252px;height:1px;background:#2e3037;"></div>
<div class="a" style="left:1484px;top:972px;width:1px;height:144px;background:#2e3037;"></div>
<div class="a" style="left:1552px;top:972px;width:1px;height:144px;background:#2e3037;"></div>
<svg class="a" style="left:448px;top:982px" width="24" height="21" viewBox="0 0 24 21"><rect x="0.20" y="0.3" width="4" height="20" rx="2" fill="#f99c3a"/><rect x="6.25" y="0.3" width="4" height="20" rx="2" fill="#f99c3a"/><rect x="12.30" y="0.3" width="4" height="20" rx="2" fill="#f99c3a"/></svg>
<div class="a" style="left:480px;top:981.5px;font-size:16px;line-height:20px;font-weight:normal;color:#f0f0f2;letter-spacing:0.69px;">No configuration/patch management</div>
<div class="a" style="left:480px;top:1004.0px;font-size:14px;line-height:18px;font-weight:normal;color:#9d9fa7;letter-spacing:0.42px;">Controls monitoring</div>
<div class="a" style="right:296.4000000000001px;text-align:right;top:991.4px;font-size:14px;line-height:18px;font-weight:normal;color:#e2e3e6;letter-spacing:0.3px;">45</div>
<div class="a" style="right:232.4000000000001px;text-align:right;top:991.4px;font-size:14px;line-height:18px;font-weight:normal;color:#e2e3e6;letter-spacing:0.3px;">142</div>
<svg class="a" style="left:1455.5px;top:993px" width="22" height="15" viewBox="0 0 22 15"><path d="M2.9 12 V1.8 H19" fill="none" stroke="#f2f2f4" stroke-width="1.75"/><path d="M0.5 12.3 H12" stroke="#f2f2f4" stroke-width="1.9" stroke-linecap="round"/><rect x="14.75" y="4.65" width="5" height="8.1" rx="0.5" fill="none" stroke="#f2f2f4" stroke-width="1.75"/></svg>
<div class="a" style="right:152.5px;text-align:right;top:978.6px;font-size:14px;line-height:18px;font-weight:normal;color:#eeeef0;letter-spacing:0.3px;">+12</div>
<div class="a" style="right:152.5px;text-align:right;top:1004.5px;font-size:14px;line-height:18px;font-weight:normal;color:#eeeef0;letter-spacing:0.3px;">-83</div>
<div class="a" style="left:1492px;top:1000px;width:36px;height:1px;background:#34363d;"></div>
<svg class="a" style="left:1535.5px;top:976.4px" width="8" height="48" viewBox="0 0 8 48"><path d="M0.7 18.60 L3.8 15.40 L6.9 18.60" fill="none" stroke="#2b2d34" stroke-width="1.45"/><path d="M0.7 14.80 L3.8 11.60 L6.9 14.80" fill="none" stroke="#2b2d34" stroke-width="1.45"/><path d="M0.7 11.00 L3.8 7.80 L6.9 11.00" fill="none" stroke="#2b2d34" stroke-width="1.45"/><path d="M0.7 7.20 L3.8 4.00 L6.9 7.20" fill="none" stroke="#2b2d34" stroke-width="1.45"/><path d="M0.7 29.40 L3.8 32.60 L6.9 29.40" fill="none" stroke="#4caf50" stroke-width="1.45"/><path d="M0.7 33.20 L3.8 36.40 L6.9 33.20" fill="none" stroke="#4caf50" stroke-width="1.45"/><path d="M0.7 37.00 L3.8 40.20 L6.9 37.00" fill="none" stroke="#2b2d34" stroke-width="1.45"/><path d="M0.7 40.80 L3.8 44.00 L6.9 40.80" fill="none" stroke="#2b2d34" stroke-width="1.45"/><path d="M3.8 20.6 L7.3 24 L3.8 27.4 L0.3 24 Z" fill="#4caf50"/></svg>
<div class="a" style="right:45px;text-align:right;top:991.4px;font-size:14px;line-height:18px;font-weight:normal;color:#e2e3e6;letter-spacing:0.45px;">11 days</div>
<div class="a" style="left:1652px;top:979px;width:8px;height:42px;background:#006878;"></div>
<svg class="a" style="left:448px;top:1038px" width="24" height="21" viewBox="0 0 24 21"><rect x="0.20" y="0.3" width="4" height="20" rx="2" fill="#f99c3a"/><rect x="6.25" y="0.3" width="4" height="20" rx="2" fill="#f99c3a"/><rect x="12.30" y="0.3" width="4" height="20" rx="2" fill="#f99c3a"/></svg>
<div class="a" style="left:480px;top:1037.5px;font-size:16px;line-height:20px;font-weight:normal;color:#f0f0f2;letter-spacing:0.628px;">CVE-2023-24955 - Vulnerability with mature exploit in KEV</div>
<div class="a" style="left:480px;top:1060.0px;font-size:14px;line-height:18px;font-weight:normal;color:#9d9fa7;letter-spacing:0.42px;">Vulnerability management</div>
<div class="a" style="right:296.4000000000001px;text-align:right;top:1047.4px;font-size:14px;line-height:18px;font-weight:normal;color:#e2e3e6;letter-spacing:0.3px;">31</div>
<div class="a" style="right:232.4000000000001px;text-align:right;top:1047.4px;font-size:14px;line-height:18px;font-weight:normal;color:#e2e3e6;letter-spacing:0.3px;">31</div>
<svg class="a" style="left:1455.5px;top:1049px" width="22" height="15" viewBox="0 0 22 15"><path d="M2.9 12 V1.8 H19" fill="none" stroke="#f2f2f4" stroke-width="1.75"/><path d="M0.5 12.3 H12" stroke="#f2f2f4" stroke-width="1.9" stroke-linecap="round"/><rect x="14.75" y="4.65" width="5" height="8.1" rx="0.5" fill="none" stroke="#f2f2f4" stroke-width="1.75"/></svg>
<div class="a" style="right:152.5px;text-align:right;top:1034.6px;font-size:14px;line-height:18px;font-weight:normal;color:#eeeef0;letter-spacing:0.3px;">+31</div>
<div class="a" style="right:152.5px;text-align:right;top:1060.5px;font-size:14px;line-height:18px;font-weight:normal;color:#eeeef0;letter-spacing:0.3px;">-0</div>
<div class="a" style="left:1492px;top:1056px;width:36px;height:1px;background:#34363d;"></div>
<svg class="a" style="left:1535.5px;top:1032.4px" width="8" height="48" viewBox="0 0 8 48"><path d="M0.7 18.60 L3.8 15.40 L6.9 18.60" fill="none" stroke="#f2e41c" stroke-width="1.45"/><path d="M0.7 14.80 L3.8 11.60 L6.9 14.80" fill="none" stroke="#f2e41c" stroke-width="1.45"/><path d="M0.7 11.00 L3.8 7.80 L6.9 11.00" fill="none" stroke="#f2e41c" stroke-width="1.45"/><path d="M0.7 7.20 L3.8 4.00 L6.9 7.20" fill="none" stroke="#f2e41c" stroke-width="1.45"/><path d="M0.7 29.40 L3.8 32.60 L6.9 29.40" fill="none" stroke="#2b2d34" stroke-width="1.45"/><path d="M0.7 33.20 L3.8 36.40 L6.9 33.20" fill="none" stroke="#2b2d34" stroke-width="1.45"/><path d="M0.7 37.00 L3.8 40.20 L6.9 37.00" fill="none" stroke="#2b2d34" stroke-width="1.45"/><path d="M0.7 40.80 L3.8 44.00 L6.9 40.80" fill="none" stroke="#2b2d34" stroke-width="1.45"/><path d="M3.8 20.6 L7.3 24 L3.8 27.4 L0.3 24 Z" fill="#f2e41c"/></svg>
<div class="a" style="right:45px;text-align:right;top:1047.4px;font-size:14px;line-height:18px;font-weight:normal;color:#e2e3e6;letter-spacing:0.45px;">5 days</div>
<div class="a" style="left:1652px;top:1035px;width:8px;height:42px;background:#006878;"></div>
<svg class="a" style="left:448px;top:1094px" width="24" height="21" viewBox="0 0 24 21"><rect x="0.20" y="0.3" width="4" height="20" rx="2" fill="#f99c3a"/><rect x="6.25" y="0.3" width="4" height="20" rx="2" fill="#f99c3a"/><rect x="12.30" y="0.3" width="4" height="20" rx="2" fill="#f99c3a"/></svg>
<div class="a" style="left:480px;top:1093.5px;font-size:16px;line-height:20px;font-weight:normal;color:#f0f0f2;letter-spacing:0.6px;">Endpoint protection not managed or in an unknown or bad protection state</div>
<div class="a" style="right:296.4000000000001px;text-align:right;top:1103.4px;font-size:14px;line-height:18px;font-weight:normal;color:#e2e3e6;letter-spacing:0.3px;">157</div>
<div class="a" style="right:232.4000000000001px;text-align:right;top:1103.4px;font-size:14px;line-height:18px;font-weight:normal;color:#e2e3e6;letter-spacing:0.3px;">357</div>
<svg class="a" style="left:1455.5px;top:1105px" width="22" height="15" viewBox="0 0 22 15"><path d="M2.9 12 V1.8 H19" fill="none" stroke="#f2f2f4" stroke-width="1.75"/><path d="M0.5 12.3 H12" stroke="#f2f2f4" stroke-width="1.9" stroke-linecap="round"/><rect x="14.75" y="4.65" width="5" height="8.1" rx="0.5" fill="none" stroke="#f2f2f4" stroke-width="1.75"/></svg>
<div class="a" style="right:152.5px;text-align:right;top:1090.6px;font-size:14px;line-height:18px;font-weight:normal;color:#eeeef0;letter-spacing:0.3px;">+8</div>
<div class="a" style="right:152.5px;text-align:right;top:1116.5px;font-size:14px;line-height:18px;font-weight:normal;color:#eeeef0;letter-spacing:0.3px;"></div>
<div class="a" style="left:1492px;top:1112px;width:36px;height:1px;background:#34363d;"></div>
<svg class="a" style="left:1535.5px;top:1088.4px" width="8" height="48" viewBox="0 0 8 48"><path d="M0.7 18.60 L3.8 15.40 L6.9 18.60" fill="none" stroke="#2b2d34" stroke-width="1.45"/><path d="M0.7 14.80 L3.8 11.60 L6.9 14.80" fill="none" stroke="#2b2d34" stroke-width="1.45"/><path d="M0.7 11.00 L3.8 7.80 L6.9 11.00" fill="none" stroke="#2b2d34" stroke-width="1.45"/><path d="M0.7 7.20 L3.8 4.00 L6.9 7.20" fill="none" stroke="#2b2d34" stroke-width="1.45"/><path d="M0.7 29.40 L3.8 32.60 L6.9 29.40" fill="none" stroke="#2b2d34" stroke-width="1.45"/><path d="M0.7 33.20 L3.8 36.40 L6.9 33.20" fill="none" stroke="#2b2d34" stroke-width="1.45"/><path d="M0.7 37.00 L3.8 40.20 L6.9 37.00" fill="none" stroke="#2b2d34" stroke-width="1.45"/><path d="M0.7 40.80 L3.8 44.00 L6.9 40.80" fill="none" stroke="#2b2d34" stroke-width="1.45"/><path d="M3.8 20.6 L7.3 24 L3.8 27.4 L0.3 24 Z" fill="#4caf50"/></svg>
<div class="a" style="right:45px;text-align:right;top:1103.4px;font-size:14px;line-height:18px;font-weight:normal;color:#e2e3e6;letter-spacing:0.45px;">12 days</div>
<div class="a" style="left:1652px;top:1091px;width:8px;height:5px;background:#f5e51d;"></div>
<div class="a" style="left:1652px;top:1096px;width:8px;height:20px;background:#006878;"></div>
<div class="a" style="left:428px;top:1117px;width:1252px;height:55px;background:#16171b;"></div>
<div class="a" style="left:448.3px;top:1134.0px;font-size:14px;line-height:18px;font-weight:normal;color:#e2e3e6;letter-spacing:0.42px;">Showing 1 - 32 of 32</div>
<svg class="a" style="left:1560.5px;top:1135px" width="15" height="15" viewBox="0 0 15 15"><path d="M7.2 0.5 V9.5 M3.3 5.8 L7.2 9.7 L11.1 5.8" fill="none" stroke="#f2f2f4" stroke-width="1.9"/><path d="M1 9.5 V13.3 H13.5 V9.5" fill="none" stroke="#f2f2f4" stroke-width="1.9"/></svg>
<div class="a" style="left:1583.8px;top:1134.0px;font-size:14px;line-height:18px;font-weight:normal;color:#e2e3e6;letter-spacing:0.2px;">Export CSV</div>
<!-- /MAIN -->
</body></html>
